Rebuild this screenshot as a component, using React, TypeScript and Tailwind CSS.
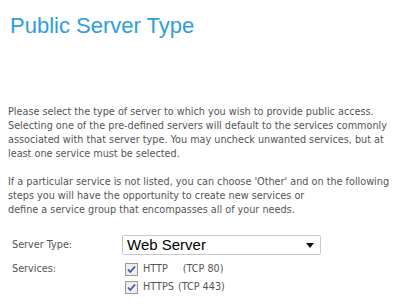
export default function App() {
  const services = [
    { name: "HTTP", port: "(TCP 80)", gap: "ml-[15px]" },
    { name: "HTTPS", port: "(TCP 443)", gap: "ml-[4px]" },
  ];

  return (
    <div className="w-[420px] h-[308px] bg-white overflow-hidden font-['Liberation_Sans',Arial,sans-serif]">
      {/* Title */}
      <h1 className="pl-[10px] pt-[12px] text-[22px] leading-[28px] text-[#2f9de0]">
        Public Server Type
      </h1>

      {/* Intro text */}
      <div className="mt-[65px] pl-[8px] text-[10.75px] leading-[14px] text-[#555] whitespace-nowrap font-['DejaVu_Sans_Condensed','DejaVu_Sans',sans-serif]">
        <p>
          Please select the type of server to which you wish to provide public access.
          <br />
          Selecting one of the pre-defined servers will default to the services commonly
          <br />
          associated with that server type. You may uncheck unwanted services, but at
          <br />
          least one service must be selected.
        </p>
        <p className="mt-[14px]">
          If a particular service is not listed, you can choose 'Other' and on the following
          <br />
          steps you will have the opportunity to create new services or
          <br />
          define a service group that encompasses all of your needs.
        </p>
      </div>

      {/* Form */}
      <div className="mt-[18px] pl-[12px] text-[10.75px] text-[#555] font-['DejaVu_Sans_Condensed','DejaVu_Sans',sans-serif]">
        <div className="flex items-center">
          <span className="w-[110px]">Server Type:</span>
          <div className="w-[199px] h-[20px] border border-[#c8c8c8] rounded-[2px] flex items-center justify-between pl-[4px] pr-[6px]">
            <span className="text-[15px] text-black font-['Liberation_Sans',Arial,sans-serif]">Web Server</span>
            <svg width="8" height="5" viewBox="0 0 8 5">
              <path d="M0 0h8L4 5z" fill="#111" />
            </svg>
          </div>
        </div>
        <div className="flex mt-[6px]">
          <span className="w-[113px] leading-[16px]">Services:</span>
          <div className="flex flex-col gap-[5px] pt-[2px]">
            {services.map((s) => (
              <label key={s.name} className="flex items-center h-[13px]">
                <span className="w-[13px] h-[13px] border border-[#999] bg-[#eee] flex items-center justify-center">
                  <svg width="9" height="9" viewBox="0 0 9 9">
                    <path d="M1 4.5l2.3 2.5L8 1.5" stroke="#3a5a9a" strokeWidth="1.8" fill="none" />
                  </svg>
                </span>
                <span className="ml-[5px]">{s.name}</span>
                <span className={s.gap}>{s.port}</span>
              </label>
            ))}
          </div>
        </div>
      </div>
    </div>
  );
}
